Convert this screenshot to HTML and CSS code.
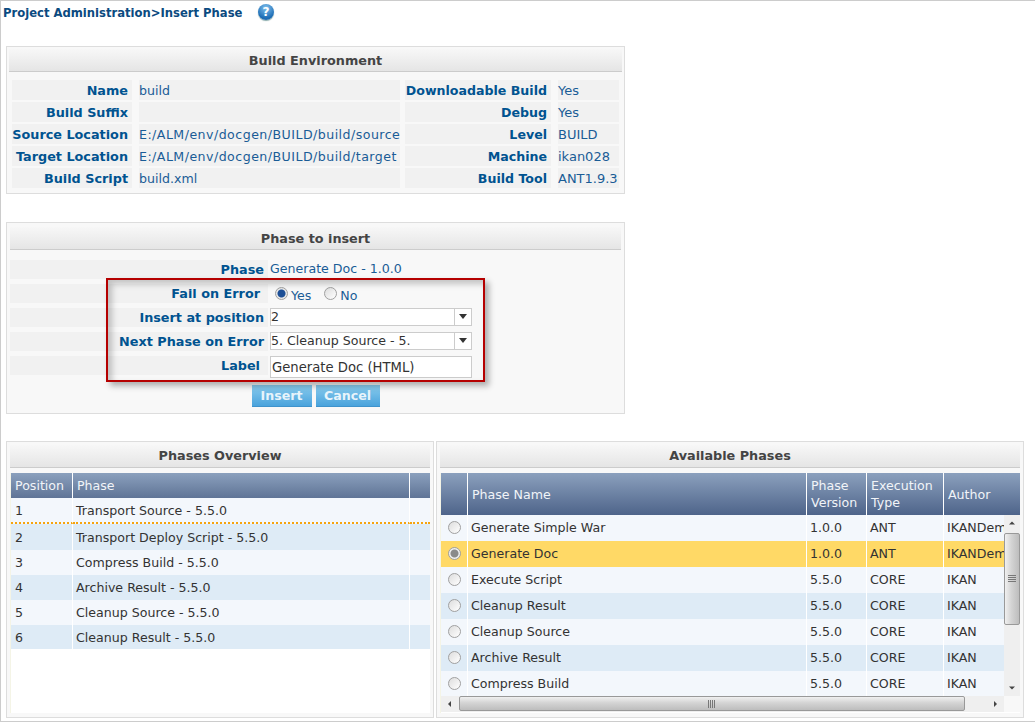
FILE: index.html
```html
<!DOCTYPE html>
<html lang="en">
<head>
<meta charset="utf-8">
<title>Insert Phase</title>
<link rel="stylesheet" href="styles.css">
</head>
<body>
<main class="page">
  <header class="crumb">
    <span class="crumb-text">Project Administration&gt;Insert Phase</span>
    <span class="help">?</span>
  </header>

  <section class="panel panel-env">
    <h2 class="panel-title">Build Environment</h2>
    <div class="env-body">
      <div class="pairs pairs-a">
        <div class="lab">Name</div><div class="val">build</div>
        <div class="lab">Build Suffix</div><div class="val"></div>
        <div class="lab">Source Location</div><div class="val val-path">E:/ALM/env/docgen/BUILD/build/source</div>
        <div class="lab">Target Location</div><div class="val val-path">E:/ALM/env/docgen/BUILD/build/target</div>
        <div class="lab">Build Script</div><div class="val">build.xml</div>
      </div>
      <div class="pairs pairs-b">
        <div class="lab">Downloadable Build</div><div class="val val-wide">Yes</div>
        <div class="lab">Debug</div><div class="val val-wide">Yes</div>
        <div class="lab">Level</div><div class="val val-wide">BUILD</div>
        <div class="lab">Machine</div><div class="val val-wide">ikan028</div>
        <div class="lab">Build Tool</div><div class="val val-wide">ANT1.9.3</div>
      </div>
    </div>
  </section>

  <section class="panel panel-form">
    <h2 class="panel-title">Phase to insert</h2>
    <div class="form-body">
      <div class="lab">Phase</div>
      <div class="plain">Generate Doc - 1.0.0</div>
      <div class="lab lab-inset">Fail on Error</div>
      <div class="plain radios">
        <span class="radio radio-on"></span><span class="radio-text">Yes</span>
        <span class="radio radio-gap"></span><span class="radio-text">No</span>
      </div>
      <div class="lab">Insert at position</div>
      <div class="select"><span class="select-text">2</span><span class="select-btn"><svg width="10" height="6" viewBox="0 0 10 6"><path d="M1 0h8L5 5z" fill="#333"/></svg></span></div>
      <div class="lab">Next Phase on Error</div>
      <div class="select"><span class="select-text">5. Cleanup Source - 5.</span><span class="select-btn"><svg width="10" height="6" viewBox="0 0 10 6"><path d="M1 0h8L5 5z" fill="#333"/></svg></span></div>
      <div class="lab lab-inset">Label</div>
      <input class="text-input" type="text" value="Generate Doc (HTML)">
    </div>
    <div class="buttons">
      <button class="btn btn-insert" type="button">Insert</button>
      <button class="btn btn-cancel" type="button">Cancel</button>
    </div>
    <div class="callout"></div>
  </section>

  <div class="bottom">
    <section class="panel panel-overview">
      <h2 class="panel-title">Phases Overview</h2>
      <div class="overview-box">
        <table class="grid overview">
          <thead>
            <tr><th class="c-pos">Position</th><th class="c-ph">Phase</th><th></th></tr>
          </thead>
          <tbody>
            <tr class="drop"><td>1</td><td>Transport Source - 5.5.0</td><td></td></tr>
            <tr class="alt tall"><td>2</td><td>Transport Deploy Script - 5.5.0</td><td></td></tr>
            <tr><td>3</td><td>Compress Build - 5.5.0</td><td></td></tr>
            <tr class="alt"><td>4</td><td>Archive Result - 5.5.0</td><td></td></tr>
            <tr><td>5</td><td>Cleanup Source - 5.5.0</td><td></td></tr>
            <tr class="alt short"><td>6</td><td>Cleanup Result - 5.5.0</td><td></td></tr>
          </tbody>
        </table>
      </div>
    </section>

    <section class="panel panel-avail">
      <h2 class="panel-title">Available Phases</h2>
      <div class="avail-box">
        <table class="grid avail-head">
          <thead>
            <tr>
              <th class="a-r"></th><th class="a-n">Phase Name</th><th class="a-v">Phase Version</th><th class="a-t">Execution Type</th><th>Author</th>
            </tr>
          </thead>
        </table>
        <div class="scroller">
          <div class="scroll-view">
            <table class="grid avail-body">
              <tbody>
                <tr><td class="a-r"><span class="radio"></span></td><td class="a-n">Generate Simple War</td><td class="a-v">1.0.0</td><td class="a-t">ANT</td><td class="a-a">IKANDemo</td></tr>
                <tr class="picked"><td class="a-r"><span class="radio radio-dim"></span></td><td class="a-n">Generate Doc</td><td class="a-v">1.0.0</td><td class="a-t">ANT</td><td class="a-a">IKANDemo</td></tr>
                <tr><td class="a-r"><span class="radio"></span></td><td class="a-n">Execute Script</td><td class="a-v">5.5.0</td><td class="a-t">CORE</td><td class="a-a">IKAN</td></tr>
                <tr class="alt"><td class="a-r"><span class="radio"></span></td><td class="a-n">Cleanup Result</td><td class="a-v">5.5.0</td><td class="a-t">CORE</td><td class="a-a">IKAN</td></tr>
                <tr><td class="a-r"><span class="radio"></span></td><td class="a-n">Cleanup Source</td><td class="a-v">5.5.0</td><td class="a-t">CORE</td><td class="a-a">IKAN</td></tr>
                <tr class="alt"><td class="a-r"><span class="radio"></span></td><td class="a-n">Archive Result</td><td class="a-v">5.5.0</td><td class="a-t">CORE</td><td class="a-a">IKAN</td></tr>
                <tr><td class="a-r"><span class="radio"></span></td><td class="a-n">Compress Build</td><td class="a-v">5.5.0</td><td class="a-t">CORE</td><td class="a-a">IKAN</td></tr>
              </tbody>
            </table>
          </div>
          <div class="vbar">
            <svg class="arrow" width="16" height="17" viewBox="0 0 16 17"><path d="M5 9.500h6L8 6.500z" fill="#444"/></svg>
            <div class="vthumb"><svg width="8" height="8" viewBox="0 0 8 8"><path d="M0 .5h8M0 2.500h8M0 4.500h8M0 6.500h8" stroke="#777"/></svg></div>
            <svg class="arrow arrow-end" width="16" height="17" viewBox="0 0 16 17"><path d="M5 7.500h6L8 10.500z" fill="#444"/></svg>
          </div>
          <div class="hbar">
            <svg class="arrow" width="17" height="16" viewBox="0 0 17 16"><path d="M10 5v6L7 8z" fill="#444"/></svg>
            <div class="hthumb"><svg width="8" height="8" viewBox="0 0 8 8"><path d="M.5 0v8M2.500 0v8M4.500 0v8M6.500 0v8" stroke="#777"/></svg></div>
            <svg class="arrow arrow-end" width="17" height="16" viewBox="0 0 17 16"><path d="M7 5v6l3-3z" fill="#444"/></svg>
          </div>
          <div class="corner"></div>
        </div>
      </div>
    </section>
  </div>
</main>
</body>
</html>
```
FILE: styles.css
```css
* { box-sizing: border-box; }
html, body { margin: 0; padding: 0; background: #fff; }
body {
  font-family: "DejaVu Sans", Verdana, sans-serif;
  font-size: 12.600px;
  color: #333;
  width: 1035px;
  height: 723px;
  overflow: hidden;
}
.page {
  width: 1035px;
  height: 722px;
  border: 1px solid #ccc;
  border-right: 0;
  padding: 0 0 0 5px;
}
.crumb {
  display: flex;
  align-items: center;
  height: 24px;
  margin-left: -3px;
  color: #0b4a80;
  font-weight: bold;
  font-size: 11.600px;
}
.crumb-text { width: 255px; white-space: nowrap; }
.help {
  width: 16px;
  height: 16px;
  margin-top: -2px;
  border-radius: 50%;
  background: radial-gradient(circle at 50% 25%, #7fc0ee, #1d6db5 70%, #2a6aa5);
  color: #fff;
  font-size: 12px;
  line-height: 16px;
  text-align: center;
  box-shadow: 0 1px 1px #8aa;
}

.panel {
  background: #f8f8f8;
  border: 1px solid #ddd;
}
.panel-title {
  margin: 0;
  font-size: 12.800px;
  font-weight: bold;
  color: #444;
  text-align: center;
  background: linear-gradient(#f7f7f7, #e5e5e5);
  border-bottom: 1px solid #ccc;
}
.panel-env {
  margin-top: 21px;
  width: 619px;
  height: 148px;
  padding: 2px 2px 0;
}
.panel-env .panel-title { height: 23px; line-height: 24px; }
.env-body {
  display: flex;
  gap: 5px;
  margin-top: 8px;
  padding-left: 3px;
}
.pairs {
  display: grid;
  column-gap: 7px;
  row-gap: 2px;
  grid-auto-rows: 20px;
}
.pairs-a { grid-template-columns: 120px 261px; }
.pairs-b { grid-template-columns: 146px 61px; }
.lab {
  background: #f1f1f1;
  color: #005390;
  font-weight: bold;
  text-align: right;
  padding-right: 4px;
  line-height: 21px;
  white-space: nowrap;
  font-size: 12.800px;
}
.pairs-b .lab { font-size: 12.600px; }
.val {
  background: #f1f1f1;
  color: #1a5c96;
  line-height: 21px;
  white-space: nowrap;
}
.val-path { letter-spacing: .46px; }
.val-wide { font-size: 13px; }

.panel-form {
  position: relative;
  margin-top: 28px;
  width: 619px;
  height: 192px;
  padding: 4px 3px 0;
}
.panel-form .panel-title { height: 23px; line-height: 24px; }
.form-body {
  display: grid;
  grid-template-columns: 258px 202px;
  column-gap: 2px;
  row-gap: 5px;
  grid-auto-rows: 19px;
  margin-top: 10px;
}
.form-body .lab { line-height: 19px; }
.form-body .lab-inset { padding-right: 8px; line-height: 19px; }
.plain { color: #1a5c96; line-height: 18px; white-space: nowrap; }
.radios { display: flex; align-items: center; gap: 3px; padding-left: 5px; }
.radio-text { padding-top: 4px; }
.radio {
  display: inline-block;
  width: 13px;
  height: 13px;
  border-radius: 50%;
  border: 1px solid #a0a0a0;
  background: linear-gradient(135deg, #ddd, #fff);
}
.radio-gap { margin-left: 10px; }
.radio-on { background: radial-gradient(circle, #1d4f96 0 3.500px, #e8e8e8 4.500px); }
.radio-dim { background: radial-gradient(circle, #8a8a8a 0 3.500px, #eee 4.500px); }
.select {
  display: flex;
  align-items: stretch;
  height: 18px;
  background: #fff;
  border: 1px solid #ccc;
  color: #333;
  line-height: 15px;
}
.select-text { flex: 1; overflow: hidden; white-space: nowrap; }
.select-btn {
  width: 17px;
  border-left: 1px solid #ccc;
  display: flex;
  align-items: center;
  justify-content: center;
}
.text-input {
  width: 202px;
  height: 22px;
  padding: 0 1px;
  background: #fff;
  border: 1px solid #ccc;
  font: 13.200px "DejaVu Sans", Verdana, sans-serif;
  color: #333;
  border-radius: 0;
  outline: none;
}
.buttons {
  display: flex;
  justify-content: center;
  gap: 4px;
  margin-top: 10px;
}
.btn {
  height: 22px;
  padding: 0;
  font: bold 12.600px "DejaVu Sans", Verdana, sans-serif;
  color: #e8f4fb;
  background: linear-gradient(#8accee, #4aa3dc);
  border: 1px solid #3f93cc;
  border-width: 0 0 1px;
  border-radius: 0;
}
.btn-insert { width: 60px; }
.btn-cancel { width: 64px; }
.callout {
  position: absolute;
  left: 99px;
  top: 55px;
  width: 379px;
  height: 104px;
  border: 2px solid #b50000;
  box-shadow: 4px 4px 6px rgba(0,0,0,.3), inset 4px 4px 6px rgba(0,0,0,.22);
  pointer-events: none;
}

.bottom {
  display: flex;
  gap: 2px;
  margin-top: 27px;
}
.panel-overview { width: 428px; height: 277px; padding: 3px 3px 0; }
.panel-avail { width: 588px; height: 277px; padding: 3px 3px 0; }
.panel-overview .panel-title, .panel-avail .panel-title { height: 23px; line-height: 21px; }
.overview-box, .avail-box {
  margin-top: 5px;
  margin-left: 1px;
  height: 240px;
  background: #fff;
  box-shadow: -1px 0 0 #f4f4e6;
}
.grid {
  width: 100%;
  border-collapse: separate;
  border-spacing: 0;
  table-layout: fixed;
  font-size: 12.600px;
}
.grid th {
  background: linear-gradient(#8ba0bd, #5f7496);
  color: #f1f4f8;
  font-weight: normal;
  text-align: left;
  padding: 0 4px;
  border-right: 1px solid #fff;
  line-height: 17px;
}
.grid th:last-child { border-right: 0; }
.grid td {
  padding: 0 3px;
  border-right: 1px solid #fff;
  white-space: nowrap;
  overflow: hidden;
  background: #f3f7fc;
}
.overview thead tr { height: 25px; }
.overview tbody tr { height: 25px; }
.overview tr.drop { height: 26px; }
.overview tr.tall { height: 26px; }
.overview tr.short { height: 24px; }
.overview tr.drop td { border-bottom: 2px dotted #f5a40f; }
.overview td:first-child { padding-left: 4px; }
.overview td:last-child { border-right: 0; }
.grid tr.alt td { background: #deebf6; }
.grid tr.picked td { background: #ffd966; }
.c-pos { width: 62px; }
.c-ph { width: 337px; }

.avail-head th { background: linear-gradient(#8ba0bd, #4e648a); }
.avail-head tr { height: 42px; }
.a-r { width: 27px; }
.a-n { width: 339px; }
.a-v { width: 60px; }
.a-t { width: 77px; }
.grid td.a-r { padding: 0 0 2px; text-align: center; line-height: 0; }
.scroller {
  display: grid;
  grid-template-columns: 563px 16px;
  grid-template-rows: 181px 16px;
}
.scroll-view { overflow: hidden; background: #fff; }
.avail-body { width: 563px; }
.avail-body tr { height: 26px; }
.avail-body td { padding-bottom: 2px; }
.a-a { width: 60px; }
.grid td.a-a { border-right: 0; padding-right: 0; }
.vbar {
  display: flex;
  flex-direction: column;
  background: #efefef;
}
.hbar {
  display: flex;
  background: #efefef;
}
.arrow { flex: none; display: block; }
.arrow-end { margin-top: auto; }
.hbar .arrow-end { margin-top: 0; margin-left: auto; }
.vthumb {
  width: 16px;
  height: 92px;
  margin-top: 1px;
  display: flex;
  align-items: center;
  justify-content: center;
  background: linear-gradient(90deg, #f0f0f0, #d4d4d4 45%, #bdbdbd);
  border: 1px solid #999;
  border-radius: 2px;
}
.hthumb {
  width: 506px;
  height: 15px;
  margin-left: 1px;
  display: flex;
  align-items: center;
  justify-content: center;
  background: linear-gradient(#f0f0f0, #d4d4d4 45%, #bdbdbd);
  border: 1px solid #999;
  border-radius: 2px;
}
.corner { background: #f8f8f8; }
```
